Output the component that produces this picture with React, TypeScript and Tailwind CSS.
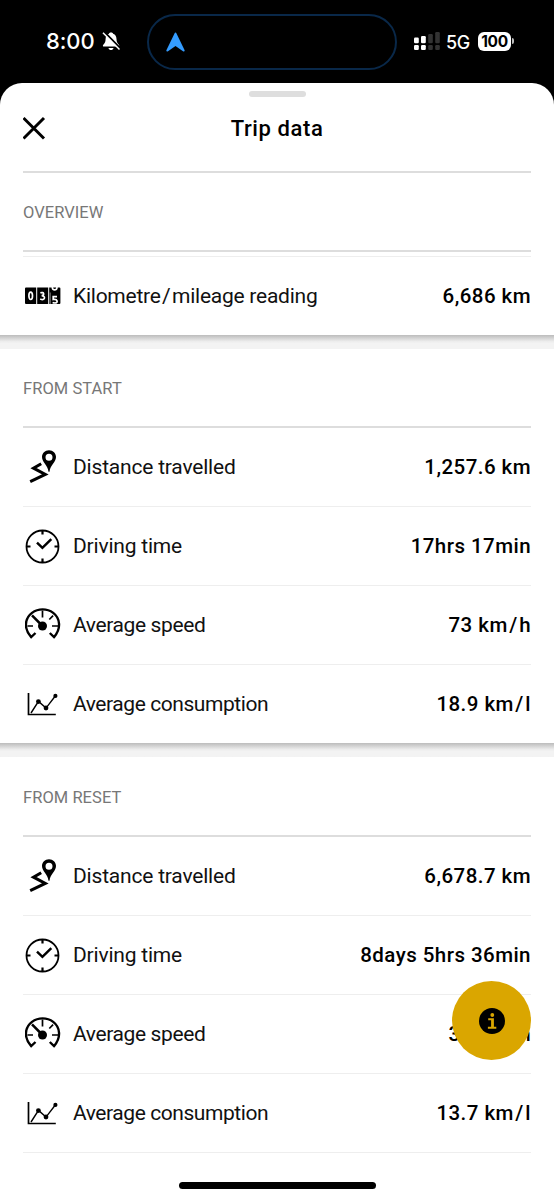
import React from 'react';

const Odometer = () => (
  <svg width="36" height="18" viewBox="0 0 36 18">
    <path d="M1 .5h10.200v16.600H1a1 1 0 0 1-1-1V1.500a1 1 0 0 1 1-1zM12.200.5h11v16.600h-11zM24.200.5H34.400a1 1 0 0 1 1 1v14.600a1 1 0 0 1-1 1H24.200z" />
    <g fill="none" stroke="#fff" strokeWidth="1.700">
      <ellipse cx="5.700" cy="8.800" rx="1.800" ry="3.700" />
      <path d="M15.400 5.900c3.800-1.500 4.400 2.600 1.200 2.700 4 0 3.700 4.500-.1 3.900-.5 0-.9-.2-1.300-.4" />
      <path d="M27.400 0v1c.3 2.500 4.200 2.500 4.500 0V0" />
      <path d="M32 9.700h-3.800v2.800c4.800-.8 5 3.500 1.800 3.500-.9 0-1.700-.2-2.400-.5" />
    </g>
    <path d="M25.200 5.500v12" stroke="#fff" strokeWidth=".5" />
  </svg>
);

const Distance = () => (
  <svg width="36" height="36" viewBox="0 0 36 36">
    <path fillRule="evenodd" d="M24 1.300c-4.100 0-7 3-7 6.800 0 5 5.700 8.300 6.500 14.600h1C25.300 16.400 31 13.100 31 8.100c0-3.800-2.900-6.800-7-6.800zm0 3.500a3.500 3.500 0 1 1 0 7 3.500 3.500 0 0 1 0-7z" />
    <path d="M16.200 14.700 8.500 19.200 20.300 25.400 5.200 32.700" fill="none" stroke="#000" strokeWidth="3" />
  </svg>
);

const Clock = () => (
  <svg width="36" height="36" viewBox="0 0 36 36" fill="none" stroke="#000">
    <circle cx="17.500" cy="18.500" r="16" strokeWidth="1.800" />
    <path d="M17.500 2.500v4M17.500 30.500v4M1.500 18.500h4M29.500 18.500h4" strokeWidth="2.200" />
    <path d="m12 14.700 5.400 5.100 8.900-8.700" strokeWidth="2.500" />
  </svg>
);

const Gauge = () => (
  <svg width="36" height="36" viewBox="0 0 36 36" fill="none" stroke="#000">
    <path d="m10.500 26-4.300 4.100C-1.600 21.500-.2 11.300 7 5.900c6.300-4.700 15-4.700 21.200 0C35.200 11.200 36.500 21.500 29 30.100L24.800 26" strokeWidth="2.400" />
    <path d="M17.500 3.500v7M2.500 19h5.500M27 19h6M24.300 12.500l3.800-3.800" strokeWidth="1.700" />
    <path d="m7 8.400 10.500 10.600" strokeWidth="2.500" />
    <circle cx="17.500" cy="19" r="4.500" fill="#000" stroke="none" />
  </svg>
);

const Consumption = () => (
  <svg width="36" height="36" viewBox="0 0 36 36" fill="none" stroke="#000">
    <path d="M3.500 7v21.500h27.300" strokeWidth="1.700" />
    <path d="m6 27 7.500-11.600 7.500 6.700 9.500-12.400" strokeWidth="1.400" />
    <g fill="#000" stroke="none">
      <circle cx="13.400" cy="15.600" r="2.400" />
      <circle cx="21" cy="22" r="2.400" />
      <circle cx="30.400" cy="9.900" r="2.100" />
    </g>
  </svg>
);

const Spaced = ({ text }: { text: string }) => {
  const [before, after] = text.split('/');
  return after === undefined ? <>{before}</> : <>{before}<span className="mx-[1.500px]">/</span>{after}</>;
};

type RowProps = { icon: React.ReactNode; label: string; value: string; tracking: string; last?: boolean };

const Row = ({ icon, label, value, tracking, last }: RowProps) => (
  <div className={`flex h-[79px] items-center border-b ${last ? 'border-transparent' : 'border-[#eeeeee]'}`}>
    <span className="flex w-[49px] shrink-0 pl-[2px]">{icon}</span>
    <span className={`whitespace-nowrap pl-[1px] pt-px text-[21px] text-[#111] ${tracking}`}><Spaced text={label} /></span>
    <span className="ml-auto whitespace-nowrap pt-px text-[20.500px] font-medium tracking-[0.450px]"><Spaced text={value} /></span>
  </div>
);

const Heading = ({ children }: { children: React.ReactNode }) => (
  <h2 className="flex h-[79px] items-center border-b-2 border-[#dddddd] pt-[3px] text-[16.500px] tracking-[0.050px] text-[#777]">{children}</h2>
);

const Divider = () => (
  <div className="h-[14px] bg-linear-to-b from-[#bcbcbc] via-[#ececec] via-45% to-[#f3f3f3] to-60%" />
);

const StatusBar = () => (
  <header className="flex h-[83px] items-start text-white">
    <span className="ml-[46px] mt-[27px] w-[56px] whitespace-nowrap font-['Inter'] text-[22px] font-medium leading-[29px] tracking-[-0.100px]">8:00</span>
    <svg className="mt-[31px]" width="20" height="20" viewBox="0 0 20 20">
      <path fill="#fff" d="M9 1.500c-1.400 0-2 .7-2 1.300C4.500 3.700 3.700 5.600 3.600 8c-.1 3-.6 4-2.300 5.800-.8.900-.4 1.800.6 1.800h14.300c1 0 1.500-.9.700-1.800C15.200 12 14.600 11 14.500 8c-.1-2.400-1-4.300-3.400-5.200 0-.6-.7-1.300-2.100-1.300zM6.500 17h5c-.4 2.700-4.600 2.700-5 0z" />
      <path d="M2.300 1 19 18" stroke="#000" strokeWidth="2" />
      <path d="M1 1.800 17.500 18.500" stroke="#fff" strokeWidth="1.500" />
    </svg>
    <div className="ml-[25px] mt-[14px] flex h-[56px] w-[250px] items-center rounded-full border-2 border-[#092849] pl-[17px]">
      <svg width="20" height="22" viewBox="0 0 20 22">
        <path d="M8.500 2.500c.4-1.500 1.600-1.500 2 0L18.500 19c.6 1.400-.5 1.900-1.500 1.200L9.500 15l-7.500 5.200c-1 .7-2.100.2-1.500-1.200z" fill="#349cff" />
      </svg>
    </div>
    <svg className="ml-[17px] mt-[31px]" width="27" height="20" viewBox="0 0 27 20">
      <g fill="#fff">
        <rect y="6.500" width="4.800" height="5.700" rx="1.200" />
        <rect x="7" y="5" width="4.800" height="7.200" rx="1.200" />
        <rect y="14" width="4.800" height="5" rx="1.200" />
        <rect x="7" y="14" width="4.800" height="5" rx="1.200" />
      </g>
      <g fill="#333">
        <rect x="14.200" y="3" width="4.600" height="9.200" rx="1.200" />
        <rect x="21.200" y="1" width="4.600" height="11.200" rx="1.200" />
        <rect x="14.200" y="14" width="4.600" height="5" rx="1.200" />
        <rect x="21.200" y="14" width="4.600" height="5" rx="1.200" />
      </g>
    </svg>
    <span className="ml-[5px] mt-[29px] w-[32px] whitespace-nowrap font-['Inter'] text-[18px] font-medium leading-[27px] tracking-[-0.300px]">5G</span>
    <span className="mt-[32px] flex h-[19px] w-[33px] items-center justify-center rounded-[6px] bg-white font-['Inter'] text-[15.500px] font-bold tracking-[-0.300px] text-black">100</span>
    <span className="ml-[1px] mt-[38px] h-[6px] w-[2px] rounded-r-full bg-[#bbb]" />
  </header>
);

const TripRows = ({ distance, time, speed, consumption, open }: { distance: string; time: string; speed: string; consumption: string; open?: boolean }) => (
  <>
    <Row icon={<Distance />} label="Distance travelled" value={distance} tracking="tracking-[-0.200px]" />
    <Row icon={<Clock />} label="Driving time" value={time} tracking="tracking-[-0.200px]" />
    <Row icon={<Gauge />} label="Average speed" value={speed} tracking="tracking-[-0.380px]" />
    <Row icon={<Consumption />} label="Average consumption" value={consumption} tracking="tracking-[-0.430px]" last={!open} />
  </>
);

export default function App() {
  return (
    <div className="relative h-[1200px] w-[554px] overflow-hidden bg-black font-['Roboto',sans-serif] text-black">
      <StatusBar />
      <main className="h-[1117px] rounded-t-[22px] bg-white">
        <div className="flex h-[8px] justify-center">
          <span className="mt-[8px] h-[6px] w-[57px] shrink-0 rounded-full bg-[#dedede]" />
        </div>
        <div className="mx-[23px] grid h-[82px] grid-cols-[40px_1fr_40px] items-center border-b-2 border-[#dddddd] pb-[6px]">
          <svg width="23" height="24" viewBox="0 0 23 24">
            <path d="m.5 2 20.500 20.500M21 2 .5 22.500" stroke="#000" strokeWidth="3" />
          </svg>
          <h1 className="text-center text-[22px] font-medium tracking-[0.600px]">Trip data</h1>
        </div>
        <section className="mx-[23px] h-[162px]">
          <Heading>OVERVIEW</Heading>
          <div className="h-[5px] border-b border-[#eeeeee]" />
          <Row icon={<Odometer />} label="Kilometre/mileage reading" value="6,686 km" tracking="tracking-[-0.250px]" last />
        </section>
        <Divider />
        <section className="mx-[23px] h-[394px]">
          <Heading>FROM START</Heading>
          <TripRows distance="1,257.6 km" time="17hrs 17min" speed="73 km/h" consumption="18.9 km/l" />
        </section>
        <Divider />
        <section className="mx-[23px] pt-px">
          <Heading>FROM RESET</Heading>
          <TripRows distance="6,678.7 km" time="8days 5hrs 36min" speed="34 km/h" consumption="13.7 km/l" open />
        </section>
      </main>
      <button className="absolute left-[452px] top-[981px] flex size-[79px] items-center justify-center rounded-full bg-[#daa600]">
        <svg width="26" height="26" viewBox="0 0 26 26">
          <circle cx="13" cy="13" r="13" />
          <circle cx="13.300" cy="7" r="1.900" fill="#daa600" />
          <path d="M9.200 10.200h5.700v8.500h2.400v2.100H8.900v-2.100h3.200v-6.500H9.200z" fill="#daa600" />
        </svg>
      </button>
      <div className="absolute left-[179px] top-[1182px] h-[7px] w-[197px] rounded-full bg-black" />
    </div>
  );
}
